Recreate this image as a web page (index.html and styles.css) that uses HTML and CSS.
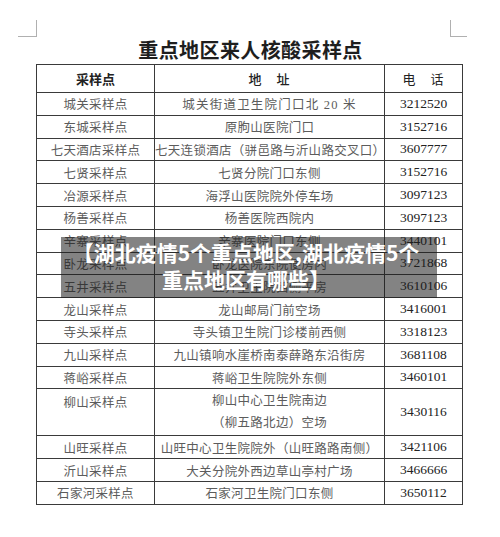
FILE: index.html
```html
<!DOCTYPE html>
<html lang="zh-CN">
<head>
<meta charset="utf-8">
<title>重点地区来人核酸采样点</title>
<link rel="stylesheet" href="styles.css">
</head>
<body>
<div class="page">
  <div class="marks"><span class="mark mark-l"></span><span class="mark mark-r"></span></div>
  <h1 class="title">重点地区来人核酸采样点</h1>
  <table class="sheet">
    <colgroup><col class="c1"><col class="c2"><col class="c3"></colgroup>
    <thead>
      <tr><th>采样点</th><th class="sp">地　址</th><th class="sp thin">电　话</th></tr>
    </thead>
    <tbody>
      <tr><td>城关采样点</td><td class="wide">城关街道卫生院门口北 20 米</td><td class="num">3212520</td></tr>
      <tr><td>东城采样点</td><td>原朐山医院门口</td><td class="num">3152716</td></tr>
      <tr><td>七天酒店采样点</td><td>七天连锁酒店（骈邑路与沂山路交叉口）</td><td class="num">3607777</td></tr>
      <tr><td>七贤采样点</td><td>七贤分院门口东侧</td><td class="num">3152716</td></tr>
      <tr><td>冶源采样点</td><td>海浮山医院院外停车场</td><td class="num">3097123</td></tr>
      <tr><td>杨善采样点</td><td>杨善医院西院内</td><td class="num">3097123</td></tr>
      <tr><td>辛寨采样点</td><td>辛寨医院门口东侧</td><td class="num">3440101</td></tr>
      <tr><td>卧龙采样点</td><td>卧龙医院东院便房内</td><td class="num">3721868</td></tr>
      <tr><td>五井采样点</td><td>五井卫生院西侧平房</td><td class="num">3610106</td></tr>
      <tr><td>龙山采样点</td><td>龙山邮局门前空场</td><td class="num">3416001</td></tr>
      <tr><td>寺头采样点</td><td>寺头镇卫生院门诊楼前西侧</td><td class="num">3318123</td></tr>
      <tr><td>九山采样点</td><td>九山镇响水崖桥南泰薛路东沿街房</td><td class="num">3681108</td></tr>
      <tr><td>蒋峪采样点</td><td>蒋峪卫生院院外东侧</td><td class="num">3460101</td></tr>
      <tr class="tall"><td class="top">柳山采样点</td><td class="two">柳山中心卫生院南边<br>（柳五路北边）空场</td><td class="num">3430116</td></tr>
      <tr><td>山旺采样点</td><td>山旺中心卫生院院外（山旺路路南侧）</td><td class="num">3421106</td></tr>
      <tr><td>沂山采样点</td><td>大关分院外西边草山亭村广场</td><td class="num">3466666</td></tr>
      <tr><td>石家河采样点</td><td>石家河卫生院门口东侧</td><td class="num">3650112</td></tr>
    </tbody>
  </table>
</div>
<div class="caption"><span class="line">【湖北疫情5个重点地区,湖北疫情5个</span><span class="line">重点地区有哪些】</span></div>
</body>
</html>
```

FILE: styles.css
```css
html, body {
  margin: 0;
  padding: 0;
  background: #ffffff;
}
body {
  position: relative;
  width: 500px;
  height: 537px;
  overflow: hidden;
  font-family: "Liberation Serif", "Noto Sans CJK SC", serif;
}
.page {
  padding-top: 20px;
}
.marks {
  display: flex;
  justify-content: space-between;
  margin: 0 33px 0 18px;
  height: 17px;
}
.mark {
  display: block;
  height: 16px;
  border-bottom: 1px solid #b0b0b0;
}
.mark-l {
  width: 18px;
  border-right: 1px solid #b0b0b0;
}
.mark-r {
  width: 16px;
  border-left: 1px solid #b0b0b0;
}
.title {
  margin: 0;
  height: 26px;
  line-height: 26px;
  text-align: center;
  font-family: "Noto Sans CJK SC", sans-serif;
  font-size: 20px;
  font-weight: 700;
  letter-spacing: 0.4px;
  color: #1e1e1e;
  padding-left: 1px;
}
.sheet {
  margin: 1px 0 0 36px;
  width: 426px;
  border-collapse: collapse;
  table-layout: fixed;
  border: 1px solid #3a3a3a;
}
.c1 { width: 118px; }
.c2 { width: 230px; }
.c3 { width: 78px; }
.sheet th,
.sheet td {
  border: 1px solid #3a3a3a;
  padding: 0;
  text-align: center;
  vertical-align: middle;
  white-space: nowrap;
}
.sheet th {
  height: 27px;
  font-family: "Noto Sans CJK SC", sans-serif;
  font-size: 13px;
  font-weight: 700;
  color: #222;
}
.sheet th.sp {
  font-weight: 500;
  letter-spacing: 1px;
}
.sheet th.thin {
  font-weight: 400;
}
.sheet td {
  height: 21.8px;
  font-size: 12.5px;
  letter-spacing: 0.3px;
  color: #5c5c5c;
}
.sheet td.wide {
  letter-spacing: 1.2px;
}
.sheet td.num {
  font-size: 13.5px;
  letter-spacing: 0;
  color: #222;
}
.sheet tr.tall td {
  height: 43px;
}
.sheet td.top {
  vertical-align: top;
  padding-top: 3px;
}
.sheet td.two {
  line-height: 22px;
}
.caption {
  position: absolute;
  left: 61px;
  top: 237px;
  width: 376px;
  height: 61px;
  box-sizing: border-box;
  padding: 2px 6px 0 0;
  display: flex;
  flex-direction: column;
  align-items: center;
  background: rgba(30, 30, 30, 0.55);
  color: #ffffff;
  font-family: "Noto Sans CJK SC", sans-serif;
  font-size: 21px;
  font-weight: 700;
  line-height: 27px;
}
.line {
  display: block;
  white-space: nowrap;
}
```
